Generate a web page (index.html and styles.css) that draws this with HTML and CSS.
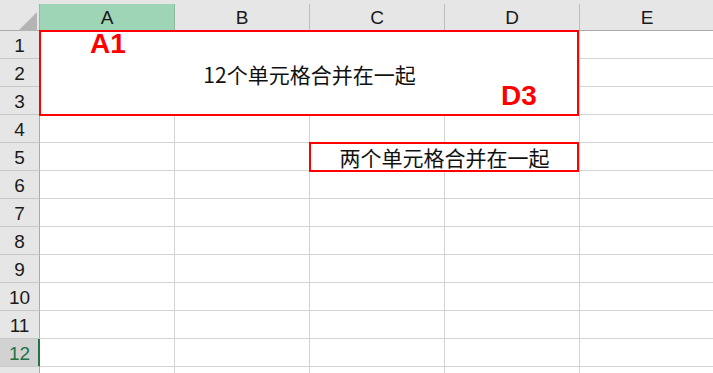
FILE: index.html
```html
<!DOCTYPE html>
<html lang="zh-CN">
<head>
  <meta charset="UTF-8">
  <meta name="viewport" content="width=device-width, initial-scale=1.0">
  <title>合并单元格</title>
  <link rel="stylesheet" href="styles.css">
</head>
<body>
  <div class="sheet">
    <div class="col-heads">
      <div class="corner"><span class="corner-mark"></span></div>
      <div class="col-head active">A</div>
      <div class="col-head">B</div>
      <div class="col-head">C</div>
      <div class="col-head">D</div>
      <div class="col-head">E</div>
    </div>
    <div class="grid">
      <div class="row-head">1</div>
      <div class="cell merged merged-a1">
        <span class="merged-text">12个单元格合并在一起</span>
        <span class="tag tag-start">A1</span>
        <span class="tag tag-end">D3</span>
      </div>
      <div class="cell"></div>
      <div class="row-head">2</div>
      <div class="cell"></div>
      <div class="row-head">3</div>
      <div class="cell"></div>

      <div class="row-head">4</div>
      <div class="cell"></div><div class="cell"></div><div class="cell"></div><div class="cell"></div><div class="cell"></div>

      <div class="row-head">5</div>
      <div class="cell"></div><div class="cell"></div>
      <div class="cell merged merged-c5"><span class="merged-text">两个单元格合并在一起</span></div>
      <div class="cell"></div>

      <div class="row-head">6</div>
      <div class="cell"></div><div class="cell"></div><div class="cell"></div><div class="cell"></div><div class="cell"></div>
      <div class="row-head">7</div>
      <div class="cell"></div><div class="cell"></div><div class="cell"></div><div class="cell"></div><div class="cell"></div>
      <div class="row-head">8</div>
      <div class="cell"></div><div class="cell"></div><div class="cell"></div><div class="cell"></div><div class="cell"></div>
      <div class="row-head">9</div>
      <div class="cell"></div><div class="cell"></div><div class="cell"></div><div class="cell"></div><div class="cell"></div>
      <div class="row-head">10</div>
      <div class="cell"></div><div class="cell"></div><div class="cell"></div><div class="cell"></div><div class="cell"></div>
      <div class="row-head">11</div>
      <div class="cell"></div><div class="cell"></div><div class="cell"></div><div class="cell"></div><div class="cell"></div>
      <div class="row-head active">12</div>
      <div class="cell"></div><div class="cell"></div><div class="cell"></div><div class="cell"></div><div class="cell"></div>
      <!-- row 13 is only a sliver at the bottom edge, its number is not visible -->
      <div class="row-head"></div>
      <div class="cell"></div><div class="cell"></div><div class="cell"></div><div class="cell"></div><div class="cell"></div>
    </div>
  </div>
</body>
</html>
```
FILE: styles.css
```css
* {
  box-sizing: border-box;
}
body {
  margin: 0;
  background: #fff;
  font-family: "Noto Sans CJK SC", sans-serif;
  color: #111;
  overflow: hidden;
}
.sheet {
  width: 713px;
  height: 373px;
  overflow: hidden;
}

/* column headers */
.col-heads {
  display: grid;
  grid-template-columns: 40px repeat(5, 135px);
  height: 31px;
  padding-top: 4px;
  background: #e6e6e6;
  border-bottom: 1px solid #ababab;
}
.corner {
  display: flex;
  justify-content: flex-end;
  align-items: flex-end;
  padding: 0 2px 1px 0;
  border-right: 1px solid #ababab;
}
.corner-mark {
  width: 19px;
  height: 19px;
  background: #b4b4b4;
  clip-path: polygon(100% 0, 100% 100%, 0 100%);
}
.col-head {
  border-right: 1px solid #bdbdbd;
  font-family: "Liberation Sans", Arial, sans-serif;
  font-size: 19px;
  line-height: 28px;
  text-align: center;
  color: #1a1a1a;
}
.col-head.active {
  background: #9fd5b7;
  border-right-color: #8fb9a0;
}

/* cells */
.grid {
  display: grid;
  grid-template-columns: 40px repeat(5, 135px);
  grid-auto-rows: 28px;
}
.cell {
  border-right: 1px solid #d4d4d4;
  border-bottom: 1px solid #d4d4d4;
}
.row-head {
  background: #e6e6e6;
  border-right: 1px solid #ababab;
  border-bottom: 1px solid #c8c8c8;
  font-family: "Liberation Sans", Arial, sans-serif;
  font-size: 19px;
  line-height: 30px;
  text-align: center;
  color: #1a1a1a;
}
.row-head.active {
  background: #d2d2d2;
  color: #217346;
  border-right-color: #217346;
  box-shadow: inset -1px 0 #217346;
}

/* merged cells with red outline */
.merged {
  position: relative;
  display: flex;
  justify-content: center;
  background: #fff;
}
.merged::after {
  content: "";
  position: absolute;
  top: -1px;
  left: -1px;
  right: 0;
  bottom: -2px;
  border: 2px solid #f00;
}
.merged-a1 {
  grid-row: 1 / 4;
  grid-column: 2 / 6;
  align-items: center;
  padding-top: 2px;
}
.merged-c5 {
  grid-row: 5;
  grid-column: 4 / 6;
  align-items: flex-end;
}
.merged-text {
  font-size: 21px;
  line-height: 26px;
}
.tag {
  position: absolute;
  font-family: "Liberation Sans", Arial, sans-serif;
  font-weight: bold;
  font-size: 28px;
  line-height: 1;
  color: #f00;
}
.tag-start {
  top: -1px;
  left: 50px;
}
.tag-end {
  top: 51px;
  left: 461px;
}
```
